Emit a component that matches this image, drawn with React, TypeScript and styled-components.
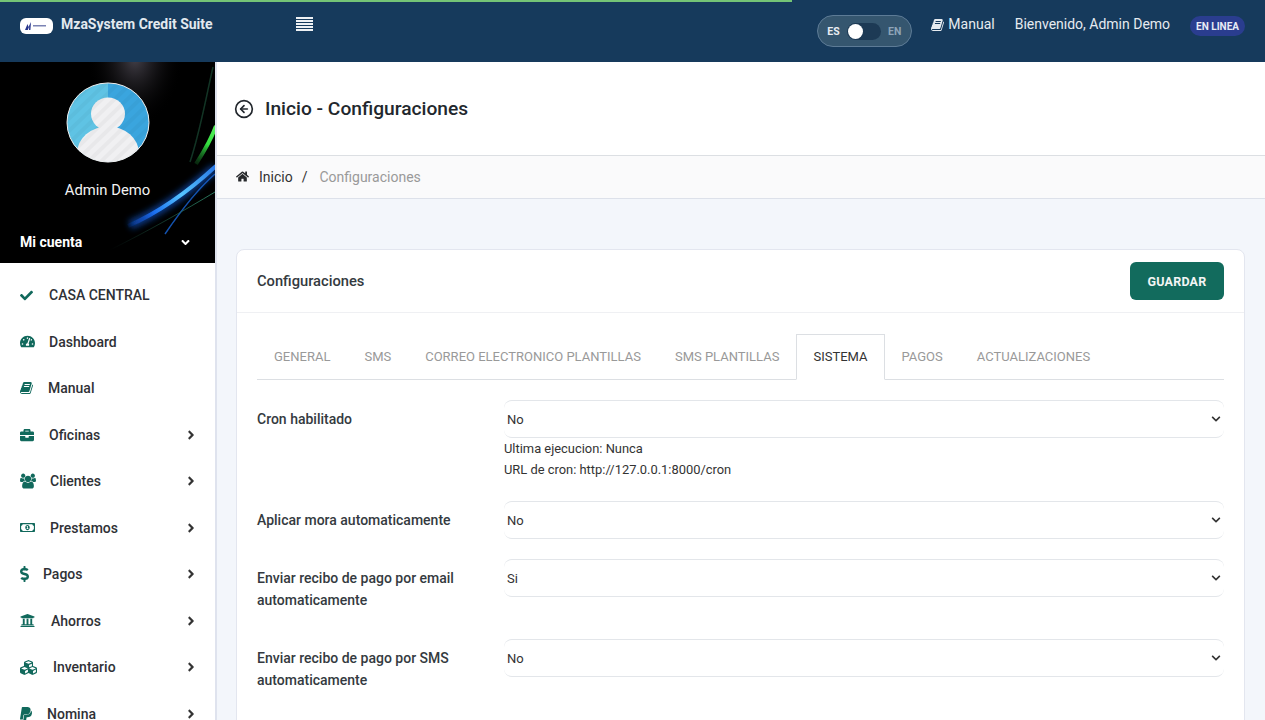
import styled, { createGlobalStyle } from "styled-components";
import {
  FaAngleDown,
  FaAngleRight,
  FaBriefcase,
  FaCheck,
  FaChevronDown,
  FaCubes,
  FaDollarSign,
  FaHome,
  FaPaypal,
  FaRegMoneyBillAlt,
  FaTachometerAlt,
  FaUniversity,
} from "react-icons/fa";
import { FiArrowLeftCircle } from "react-icons/fi";

const GlobalStyle = createGlobalStyle`
  html, body {
    margin: 0;
    padding: 0;
    height: 100%;
    overflow: hidden;
  }
  body {
    font-family: Roboto, "Liberation Sans", sans-serif;
    background: #f3f6fb;
    color: #333;
  }
`;

const Page = styled.div`
  position: relative;
  height: 720px;
  overflow: hidden;
  display: flex;
  flex-direction: column;
`;

const ProgressBar = styled.div`
  position: absolute;
  top: 0;
  left: 0;
  width: 792px;
  height: 2px;
  background: #74c476;
  z-index: 5;
`;

const TopBar = styled.header`
  height: 62px;
  flex: none;
  background: #163a5c;
  display: flex;
  color: #fff;
`;

const Brand = styled.div`
  width: 296px;
  flex: none;
  display: flex;
  align-items: flex-start;
  gap: 8px;
  padding: 16px 0 0 20px;
  box-sizing: border-box;
  font-size: 14px;
  font-weight: 700;
  color: #e3e9ef;
  line-height: 17px;
`;

const LogoPill = styled.div`
  width: 33px;
  height: 16px;
  margin-top: 2px;
  border-radius: 6px;
  background: #fff;
  display: flex;
  align-items: center;
  justify-content: center;
`;

const MenuButton = styled.div`
  width: 17px;
  padding-top: 17px;
  display: flex;
  flex-direction: column;
  gap: 1.4px;
  span {
    display: block;
    height: 1.6px;
    background: #eef1f4;
  }
`;

const TopRight = styled.div`
  margin-left: auto;
  display: flex;
  align-items: flex-start;
  padding-right: 20px;
`;

const LangSwitch = styled.div`
  width: 95px;
  height: 32px;
  margin-top: 15px;
  margin-right: 19px;
  box-sizing: border-box;
  border: 1px solid #5d7b96;
  border-radius: 16px;
  background: #35566f;
  display: flex;
  align-items: center;
  justify-content: space-between;
  padding: 0 10px 0 9px;
  font-size: 10.5px;
  font-weight: 700;
`;

const LangLabel = styled.span<{ $muted?: boolean }>`
  color: ${({ $muted }) => ($muted ? "#8ea4b8" : "#e8edf2")};
`;

const SwitchTrack = styled.div`
  width: 34px;
  height: 17px;
  border-radius: 9px;
  background: #1d3a55;
  display: flex;
  align-items: center;
  padding-left: 1px;
  box-sizing: border-box;
`;

const SwitchKnob = styled.div`
  width: 15px;
  height: 15px;
  border-radius: 50%;
  background: #fff;
`;

const TopLink = styled.div`
  display: flex;
  align-items: center;
  gap: 3px;
  font-size: 14px;
  line-height: 17px;
  margin-top: 16px;
  margin-right: 20px;
  color: #e6ebf0;
`;

const StatusBadge = styled.div`
  margin-top: 16px;
  height: 20px;
  padding: 0 6px;
  border-radius: 10px;
  background: #2a3d8f;
  color: #e8ecf6;
  font-size: 10px;
  font-weight: 700;
  display: flex;
  align-items: center;
`;

const Body = styled.div`
  flex: 1;
  display: flex;
  min-height: 0;
`;

const Sidebar = styled.aside`
  width: 217px;
  flex: none;
  box-sizing: border-box;
  background: #fff;
  border-right: 2px solid #dfe3ee;
  overflow: hidden;
`;

const Profile = styled.div`
  position: relative;
  height: 201px;
  background: #000;
  overflow: hidden;
  display: flex;
  flex-direction: column;
  align-items: center;
`;

const ProfileArt = styled.svg`
  position: absolute;
  inset: 0;
  width: 100%;
  height: 100%;
`;

const Avatar = styled.svg`
  position: relative;
  width: 84px;
  height: 81px;
  margin-top: 20px;
`;

const ProfileName = styled.div`
  position: relative;
  margin-top: 18px;
  font-size: 14.8px;
  line-height: 18px;
  color: #f2f2f2;
`;

const AccountRow = styled.div`
  position: relative;
  margin-top: auto;
  width: 100%;
  box-sizing: border-box;
  display: flex;
  align-items: center;
  justify-content: space-between;
  padding: 0 23px 12px 20px;
  font-size: 14px;
  font-weight: 700;
  line-height: 17px;
  color: #fff;
`;

const NavList = styled.nav`
  padding-top: 9px;
`;

const NavRow = styled.div`
  height: 46.5px;
  display: flex;
  align-items: center;
  padding: 0 17px 0 20px;
  box-sizing: border-box;
  font-size: 14px;
  font-weight: 500;
  color: #2f3136;
`;

const NavIcon = styled.span<{ $gap: number }>`
  display: flex;
  align-items: center;
  color: #11695c;
  margin-right: ${({ $gap }) => $gap}px;
`;

const NavChevron = styled.span`
  margin-left: auto;
  display: flex;
  color: #333;
`;

const DollarIcon = styled(FaDollarSign)`
  width: 9px;
  height: 16px;
`;

const PaypalIcon = styled(FaPaypal)`
  width: 12px;
  height: 16px;
`;

const Main = styled.main`
  flex: 1;
  min-width: 0;
  display: flex;
  flex-direction: column;
`;

const TitleBar = styled.div`
  height: 94px;
  flex: none;
  box-sizing: border-box;
  background: #fff;
  border-bottom: 1px solid #dcdfe3;
  display: flex;
  align-items: flex-start;
  gap: 11px;
  padding: 35px 19px 0 17px;
  color: #22272d;
`;

const BackIcon = styled.span`
  display: flex;
  margin-top: 2px;
`;

const PageTitle = styled.h1`
  margin: 0;
  font-size: 19.2px;
  line-height: 24px;
  font-weight: 500;
`;

const Breadcrumb = styled.div`
  height: 43px;
  flex: none;
  box-sizing: border-box;
  background: #fafafb;
  border-bottom: 1px solid #dde1ea;
  display: flex;
  align-items: center;
  padding: 0 19px 1px;
  font-size: 14px;
  color: #333;
`;

const CrumbIcon = styled.span`
  display: flex;
  margin-right: 10px;
  color: #27292c;
`;

const CrumbSep = styled.span`
  margin: 0 12px 0 9px;
`;

const CrumbCurrent = styled.span`
  color: #999;
`;

const Content = styled.div`
  padding: 50px 20px 0 19px;
`;

const Card = styled.section`
  background: #fff;
  border: 1px solid #e3e6ef;
  border-radius: 8px;
`;

const CardHeader = styled.div`
  height: 63px;
  box-sizing: border-box;
  border-bottom: 1px solid #eff0f3;
  display: flex;
  align-items: center;
  justify-content: space-between;
  padding: 0 20px;
`;

const CardTitle = styled.h2`
  margin: 0;
  font-size: 14.7px;
  font-weight: 500;
  color: #343a40;
`;

const SaveButton = styled.button`
  width: 94px;
  height: 38px;
  border: none;
  border-radius: 6px;
  background: #126b5d;
  color: #f2f5f4;
  font-family: inherit;
  font-size: 12.5px;
  font-weight: 700;
  letter-spacing: 0.2px;
`;

const CardBody = styled.div`
  padding: 21px 20px 40px;
`;

const Tabs = styled.div`
  display: flex;
  height: 46px;
  box-sizing: border-box;
  border-bottom: 1px solid #dcdfe3;
  margin-bottom: 20px;
`;

const Tab = styled.div<{ $active?: boolean }>`
  height: 46px;
  box-sizing: border-box;
  padding: 0 16px 2px;
  display: flex;
  align-items: center;
  font-size: 13px;
  color: ${({ $active }) => ($active ? "#333" : "#999")};
  background: ${({ $active }) => ($active ? "#fff" : "transparent")};
  border: 1px solid ${({ $active }) => ($active ? "#dcdfe3" : "transparent")};
  border-bottom-color: ${({ $active }) => ($active ? "#fff" : "transparent")};
`;

const FormRow = styled.div<{ $gap: number }>`
  display: grid;
  grid-template-columns: 247px 1fr;
  margin-bottom: ${({ $gap }) => $gap}px;
`;

const FieldLabel = styled.label`
  font-size: 14px;
  font-weight: 500;
  line-height: 22px;
  color: #343a40;
  padding-top: 8px;
`;

const SelectBox = styled.div`
  height: 38px;
  box-sizing: border-box;
  border-top: 1px solid #e3e6ea;
  border-bottom: 1px solid #e3e6ea;
  border-radius: 8px;
  display: flex;
  align-items: center;
  justify-content: space-between;
  padding: 0 3px;
  font-size: 13px;
  color: #333;
`;

const HelpText = styled.div`
  font-size: 12.9px;
  line-height: 21px;
  color: #333;
`;

const BookIcon = ({ size }: { size: number }) => (
  <svg width={size} height={size} viewBox="0 0 1792 1792" fill="currentColor">
    <path d="M1639 478q40 57 18 129l-275 906q-19 64-76.5 107.5t-122.5 43.5h-923q-77 0-148.5-53.5t-99.5-131.5q-24-67-2-127 0-4 3-27t4-37q1-8-3-21.5t-3-19.5q2-11 8-21t16.5-23.5 16.5-23.5q23-38 45-91.5t30-91.5q3-10 .5-30t-.5-28q3-11 17-28t17-23q21-36 42-92t25-90q1-9-2.5-32t.5-28q4-13 22-30.5t22-22.5q19-26 42.5-84.5t27.5-96.5q1-8-3-25.5t-2-26.5q2-8 9-18t18-23 17-21q8-12 16.5-30.5t15-35 16-36 19.5-32 26.5-23.5 36-11.5 47.5 5.5l-1 3q38-9 51-9h761q74 0 114 56t18 130l-274 906q-36 119-71.5 153.5t-128.5 34.5h-869q-27 0-38 15-11 16-1 43 24 70 144 70h923q29 0 56-15.5t35-41.5l300-987q7-22 5-57 38 15 59 43zm-1064 2q-4 13 2 22.5t20 9.5h608q13 0 25.5-9.5t16.5-22.5l21-64q4-13-2-22.5t-20-9.5h-608q-13 0-25.5 9.5t-16.5 22.5zm-83 256q-4 13 2 22.5t20 9.5h608q13 0 25.5-9.5t16.5-22.5l21-64q4-13-2-22.5t-20-9.5h-608q-13 0-25.5 9.5t-16.5 22.5z" />
  </svg>
);

const UsersIcon = ({ size }: { size: number }) => (
  <svg width={size} height={size} viewBox="0 0 1920 1792" fill="currentColor">
    <path d="M593 896q-162 5-265 128h-134q-82 0-138-40.5t-56-118.5q0-353 124-353 6 0 43.5 21t97.5 42.5 119 21.5q67 0 133-23-5 37-5 66 0 139 81 256zm1071 637q0 120-73 189.5t-194 69.5h-874q-121 0-194-69.5t-73-189.5q0-53 3.5-103.5t14-109 26.5-108.5 43-97.5 62-81 85.5-53.5 111.5-20q10 0 43 21.5t73 48 107 48 135 21.5 135-21.5 107-48 73-48 43-21.5q61 0 111.5 20t85.5 53.5 62 81 43 97.5 26.5 108.5 14 109 3.5 103.5zm-1024-1277q0 106-75 181t-181 75-181-75-75-181 75-181 181-75 181 75 75 181zm704 384q0 159-112.5 271.5t-271.5 112.5-271.5-112.5-112.5-271.5 112.5-271.5 271.5-112.5 271.5 112.5 112.5 271.5zm576 225q0 78-56 118.5t-138 40.5h-134q-103-123-265-128 81-117 81-256 0-29-5-66 66 23 133 23 59 0 119-21.5t97.5-42.5 43.5-21q124 0 124 353zm-128-609q0 106-75 181t-181 75-181-75-75-181 75-181 181-75 181 75 75 181z" />
  </svg>
);

const NAV_ITEMS = [
  { label: "CASA CENTRAL", icon: <FaCheck size={13} />, gap: 16, sub: false },
  { label: "Dashboard", icon: <FaTachometerAlt size={15} />, gap: 14, sub: false },
  { label: "Manual", icon: <BookIcon size={14} />, gap: 14, sub: false },
  { label: "Oficinas", icon: <FaBriefcase size={14} />, gap: 15, sub: true },
  { label: "Clientes", icon: <UsersIcon size={16} />, gap: 14, sub: true },
  { label: "Prestamos", icon: <FaRegMoneyBillAlt size={15} />, gap: 15, sub: true },
  { label: "Pagos", icon: <DollarIcon />, gap: 14, sub: true },
  { label: "Ahorros", icon: <FaUniversity size={15} />, gap: 16, sub: true },
  { label: "Inventario", icon: <FaCubes size={17} />, gap: 16, sub: true },
  { label: "Nomina", icon: <PaypalIcon />, gap: 15, sub: true },
];

const TABS = [
  "GENERAL",
  "SMS",
  "CORREO ELECTRONICO PLANTILLAS",
  "SMS PLANTILLAS",
  "SISTEMA",
  "PAGOS",
  "ACTUALIZACIONES",
];

function Select({ value }: { value: string }) {
  return (
    <SelectBox>
      <span>{value}</span>
      <FaChevronDown size={10} color="#333" />
    </SelectBox>
  );
}

export default function App() {
  return (
    <>
      <GlobalStyle />
      <Page>
        <ProgressBar />
        <TopBar>
          <Brand>
            <LogoPill>
              <svg width="28" height="12" viewBox="0 0 28 12">
                <path d="M2 10 L4.5 4 L5.5 7 L8 2 L7.4 10 L6 10 L6.2 6.5 L4.8 10 Z" fill="#26358c" />
                <rect x="10" y="5" width="13" height="1.5" fill="#7b83b4" />
              </svg>
            </LogoPill>
            MzaSystem Credit Suite
          </Brand>
          <MenuButton>
            <span />
            <span />
            <span />
            <span />
            <span />
          </MenuButton>
          <TopRight>
            <LangSwitch>
              <LangLabel>ES</LangLabel>
              <SwitchTrack>
                <SwitchKnob />
              </SwitchTrack>
              <LangLabel $muted>EN</LangLabel>
            </LangSwitch>
            <TopLink>
              <BookIcon size={14} />
              Manual
            </TopLink>
            <TopLink>Bienvenido, Admin Demo</TopLink>
            <StatusBadge>EN LINEA</StatusBadge>
          </TopRight>
        </TopBar>
        <Body>
          <Sidebar>
            <Profile>
              <ProfileArt viewBox="0 0 215 201" preserveAspectRatio="none">
                <defs>
                  <radialGradient id="glow" gradientUnits="userSpaceOnUse" cx="0" cy="0" r="1" gradientTransform="translate(135 -5) scale(48 70)">
                    <stop offset="0" stopColor="#4a4650" stopOpacity="0.95" />
                    <stop offset="1" stopColor="#000" stopOpacity="0" />
                  </radialGradient>
                  <linearGradient id="streak" gradientUnits="userSpaceOnUse" x1="125" y1="165" x2="215" y2="105">
                    <stop offset="0" stopColor="#0d47c8" stopOpacity="0" />
                    <stop offset="0.3" stopColor="#1b6ff0" />
                    <stop offset="0.6" stopColor="#55c4ff" />
                    <stop offset="1" stopColor="#2a7ae8" />
                  </linearGradient>
                  <linearGradient id="greenStreak" gradientUnits="userSpaceOnUse" x1="195" y1="105" x2="215" y2="62">
                    <stop offset="0" stopColor="#0c4a20" stopOpacity="0.3" />
                    <stop offset="0.55" stopColor="#34e03f" />
                    <stop offset="1" stopColor="#5cf060" />
                  </linearGradient>
                  <linearGradient id="tealStreak" gradientUnits="userSpaceOnUse" x1="110" y1="188" x2="215" y2="130">
                    <stop offset="0" stopColor="#1f5a48" stopOpacity="0" />
                    <stop offset="1" stopColor="#2a7a60" />
                  </linearGradient>
                  <filter id="soft" x="-20%" y="-20%" width="140%" height="140%">
                    <feGaussianBlur stdDeviation="0.6" />
                  </filter>
                  <filter id="softer" x="-20%" y="-20%" width="140%" height="140%">
                    <feGaussianBlur stdDeviation="3" />
                  </filter>
                </defs>
                <rect x="0" y="0" width="215" height="80" fill="url(#glow)" />
                <path d="M213 5 C205 40 200 70 190 100" stroke="#1a4a34" strokeWidth="1.5" fill="none" opacity="0.7" filter="url(#soft)" />
                <path d="M216 64 C211 78 205 88 196 102" stroke="url(#greenStreak)" strokeWidth="4" fill="none" filter="url(#soft)" />
                <path d="M130 163 C160 150 190 128 215 106" stroke="#1260e0" strokeWidth="9" fill="none" opacity="0.6" filter="url(#softer)" />
                <path d="M128 164 C160 150 190 128 216 104" stroke="url(#streak)" strokeWidth="4" fill="none" filter="url(#soft)" />
                <path d="M165 172 C180 150 200 125 215 112" stroke="#1a66d8" strokeWidth="1.5" fill="none" opacity="0.8" filter="url(#soft)" />
                <path d="M110 188 C150 168 185 148 215 130" stroke="url(#tealStreak)" strokeWidth="1" fill="none" />
              </ProfileArt>
              <Avatar viewBox="0 0 84 84" preserveAspectRatio="none">
                <defs>
                  <clipPath id="avatarClip">
                    <circle cx="42" cy="42" r="41" />
                  </clipPath>
                  <pattern id="stripes" width="9" height="9" patternUnits="userSpaceOnUse" patternTransform="rotate(45)">
                    <rect width="4" height="9" fill="#000" opacity="0.03" />
                  </pattern>
                </defs>
                <g clipPath="url(#avatarClip)">
                  <rect x="0" y="0" width="42" height="84" fill="#5fc3e4" />
                  <rect x="42" y="0" width="42" height="84" fill="#3aa5de" />
                  <circle cx="42" cy="33" r="17" fill="#f0f0f2" />
                  <ellipse cx="42" cy="74" rx="31" ry="28" fill="#f0f0f2" />
                  <rect x="0" y="0" width="84" height="84" fill="url(#stripes)" />
                </g>
                <circle cx="42" cy="42" r="41" fill="none" stroke="#f2f2f2" strokeWidth="1" />
              </Avatar>
              <ProfileName>Admin Demo</ProfileName>
              <AccountRow>
                Mi cuenta
                <FaAngleDown size={13} />
              </AccountRow>
            </Profile>
            <NavList>
              {NAV_ITEMS.map((item) => (
                <NavRow key={item.label}>
                  <NavIcon $gap={item.gap}>{item.icon}</NavIcon>
                  {item.label}
                  {item.sub && (
                    <NavChevron>
                      <FaAngleRight size={14} />
                    </NavChevron>
                  )}
                </NavRow>
              ))}
            </NavList>
          </Sidebar>
          <Main>
            <TitleBar>
              <BackIcon>
                <FiArrowLeftCircle size={20} />
              </BackIcon>
              <PageTitle>Inicio - Configuraciones</PageTitle>
            </TitleBar>
            <Breadcrumb>
              <CrumbIcon>
                <FaHome size={13} />
              </CrumbIcon>
              Inicio
              <CrumbSep>/</CrumbSep>
              <CrumbCurrent>Configuraciones</CrumbCurrent>
            </Breadcrumb>
            <Content>
              <Card>
                <CardHeader>
                  <CardTitle>Configuraciones</CardTitle>
                  <SaveButton>GUARDAR</SaveButton>
                </CardHeader>
                <CardBody>
                  <Tabs>
                    {TABS.map((tab) => (
                      <Tab key={tab} $active={tab === "SISTEMA"}>
                        {tab}
                      </Tab>
                    ))}
                  </Tabs>
                  <FormRow $gap={21}>
                    <FieldLabel>Cron habilitado</FieldLabel>
                    <div>
                      <Select value="No" />
                      <HelpText>
                        Ultima ejecucion: Nunca
                        <br />
                        URL de cron: http://127.0.0.1:8000/cron
                      </HelpText>
                    </div>
                  </FormRow>
                  <FormRow $gap={20}>
                    <FieldLabel>Aplicar mora automaticamente</FieldLabel>
                    <Select value="No" />
                  </FormRow>
                  <FormRow $gap={28}>
                    <FieldLabel>
                      Enviar recibo de pago por email automaticamente
                    </FieldLabel>
                    <Select value="Si" />
                  </FormRow>
                  <FormRow $gap={20}>
                    <FieldLabel>
                      Enviar recibo de pago por SMS automaticamente
                    </FieldLabel>
                    <Select value="No" />
                  </FormRow>
                </CardBody>
              </Card>
            </Content>
          </Main>
        </Body>
      </Page>
    </>
  );
}
